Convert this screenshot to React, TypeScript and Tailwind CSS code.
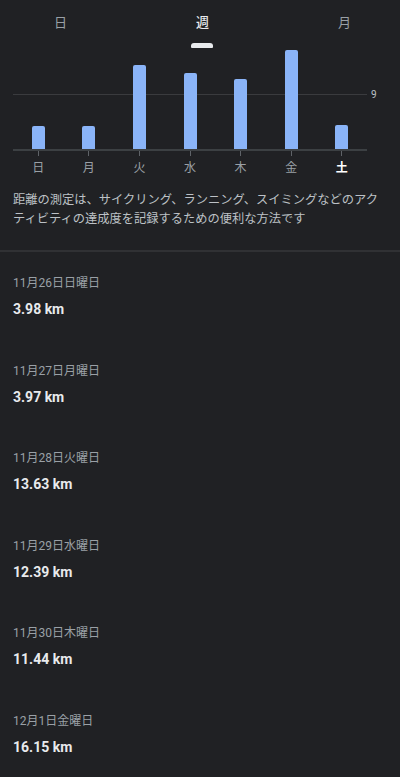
import React from "react";

const BARS = [
  { day: "日", h: 23 },
  { day: "月", h: 23 },
  { day: "火", h: 84 },
  { day: "水", h: 76 },
  { day: "木", h: 70 },
  { day: "金", h: 99 },
  { day: "土", h: 24, today: true },
];

const ENTRIES = [
  { date: "11月26日日曜日", km: "3.98 km" },
  { date: "11月27日月曜日", km: "3.97 km" },
  { date: "11月28日火曜日", km: "13.63 km" },
  { date: "11月29日水曜日", km: "12.39 km" },
  { date: "11月30日木曜日", km: "11.44 km" },
  { date: "12月1日金曜日", km: "16.15 km" },
];

export default function App() {
  return (
    <div
      className="w-[400px] h-[777px] overflow-hidden bg-[#202124] text-[#e8eaed]"
      style={{ fontFamily: 'Roboto, "Noto Sans CJK JP", sans-serif' }}
    >
      {/* period tabs */}
      <div className="flex justify-between items-center h-[43px] pl-[54px] pr-[49px] pt-[1px] text-[13px] leading-none">
        <span className="text-[#9aa0a6]">日</span>
        <span className="text-[#e8eaed] font-medium">週</span>
        <span className="text-[#9aa0a6]">月</span>
      </div>
      <div className="flex justify-center pl-[4px]">
        <div className="w-[22px] h-[5px] bg-[#e8eaed] rounded-t-[3px] rounded-b-[1px]" />
      </div>

      {/* chart */}
      <div className="relative ml-[13px] w-[354px] h-[101px] flex items-end">
        <div className="absolute left-0 right-0 top-[46px] h-px bg-[#3a3b3e]" />
        <span className="absolute left-[358px] top-[42px] text-[10px] leading-none text-[#bdc1c6]">9</span>
        {BARS.map((b) => (
          <div key={b.day} className="flex-1 flex justify-center">
            <div
              className="relative w-[13px] bg-[#8ab4f8] rounded-t-[2px]"
              style={{ height: b.h }}
            />
          </div>
        ))}
      </div>
      <div className="ml-[13px] w-[354px] h-[2px] bg-[#3c4043]" />
      <div className="ml-[13px] w-[354px] flex">
        {BARS.map((b) => (
          <div key={b.day} className="flex-1 flex flex-col items-center">
            <div className="w-px h-[5px] bg-[#5f6368]" />
            <span
              className={
                "mt-[5px] text-[12px] leading-[14px] " +
                (b.today ? "text-white font-bold" : "text-[#9aa0a6]")
              }
            >
              {b.day}
            </span>
          </div>
        ))}
      </div>

      {/* description */}
      <p className="px-[13px] pt-[16px] pb-[21px] text-[12.25px] leading-[19px] text-[#bdc1c6]">
        距離の測定は、サイクリング、ランニング、スイミングなどのアクティビティの達成度を記録するための便利な方法です
      </p>
      <div className="h-[2px] bg-[#303134]" />

      {/* daily entries */}
      <div className="flex flex-col">
        {ENTRIES.map((e) => (
          <div key={e.date} className="h-[87.6px] shrink-0 px-[13px] pt-[23px] flex flex-col">
            <span className="text-[12px] leading-[16px] text-[#9aa0a6]">{e.date}</span>
            <span className="mt-[8px] text-[14px] leading-[20px] font-bold text-[#e8eaed]">{e.km}</span>
          </div>
        ))}
      </div>
    </div>
  );
}
